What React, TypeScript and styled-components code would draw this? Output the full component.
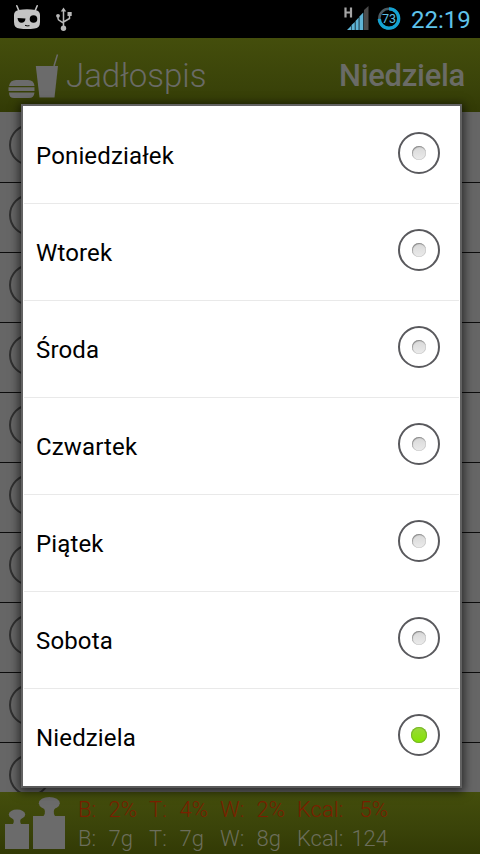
import React from 'react';
import styled, { createGlobalStyle } from 'styled-components';

const GlobalStyle = createGlobalStyle`
  * { box-sizing: border-box; }
  body { margin: 0; overflow: hidden; background: #000; font-family: Roboto, sans-serif; }
`;

const Screen = styled.div`
  position: relative;
  width: 480px;
  height: 854px;
  display: flex;
  flex-direction: column;
  overflow: hidden;
  background: #666;
`;

const StatusBar = styled.header`
  height: 38px;
  flex: none;
  display: flex;
  align-items: flex-start;
  justify-content: space-between;
  background: #000;
`;

const StatusGroup = styled.div`
  display: flex;
  align-items: flex-start;
  height: 38px;
  svg { display: block; }
`;

const Clock = styled.time`
  width: 60px;
  margin: 4px 9px 0 8px;
  font-size: 24px;
  line-height: 32px;
  white-space: nowrap;
  color: #5fc3ea;
`;

const ActionBar = styled.div`
  height: 74px;
  flex: none;
  display: flex;
  align-items: center;
  padding: 2px 15px 0 8px;
  background: linear-gradient(#444e0c, #3a4309 65%, #323a05);
  color: #6a6b66;
`;

const Title = styled.h1`
  flex: 1;
  margin: 0 0 0 7px;
  font-size: 33px;
  line-height: 40px;
  font-weight: 300;
`;

const DayLabel = styled.div`
  font-size: 31px;
  line-height: 40px;
  font-weight: 500;
  letter-spacing: -0.3px;
`;

const MealList = styled.ul`
  flex: 1;
  min-height: 0;
  margin: 0;
  padding: 0;
  overflow: hidden;
  list-style: none;
`;

const MealRow = styled.li`
  height: 70px;
  display: flex;
  align-items: center;
  padding-left: 9px;
  border-bottom: 1px solid #0c0c0c;
  &:first-child { height: 71px; }
`;

const MealCircle = styled.span`
  width: 42px;
  height: 42px;
  margin-top: -5px;
  border: 2px solid #303030;
  border-radius: 50%;
`;

const Summary = styled.footer`
  height: 62px;
  flex: none;
  display: flex;
  padding-left: 5px;
  background: linear-gradient(#444e0c, #3a4309 60%, #323a05);
`;

const Totals = styled.div`
  width: 324px;
  margin: 3px 0 0 12px;
`;

const TotalsRow = styled.div<{ $over?: boolean }>`
  display: grid;
  grid-template-columns: 27px 32px 12px 28px 31px 12px 29px 36px 12px 46px 45px;
  height: 29px;
  line-height: 29px;
  font-size: 22px;
  font-weight: 300;
  white-space: nowrap;
  color: ${p => (p.$over ? '#7a1f00' : '#6c6e5c')};
`;

const TotalLabel = styled.span<{ $col: number }>`
  grid-column: ${p => p.$col};
`;

const TotalValue = styled.span<{ $col: number; $shift?: boolean }>`
  grid-column: ${p => p.$col};
  display: flex;
  justify-content: flex-end;
  padding-right: ${p => (p.$shift ? '4px' : '0')};
`;

const Dialog = styled.div`
  position: absolute;
  left: 21px;
  top: 104px;
  width: 441px;
  height: 684px;
  border: 2px solid #626262;
  border-bottom-color: #5a5a5a;
  background: #fff;
  box-shadow: 0 2px 9px 2px rgba(0, 0, 0, 0.6);
`;

const Option = styled.div`
  height: 97px;
  display: flex;
  align-items: center;
  justify-content: space-between;
  margin: 0 1px;
  padding: 2px 19px 0 12px;
  border-bottom: 1px solid #e9e9e9;
  &:first-child { height: 98px; padding-top: 3px; }
  &:last-child { border-bottom-color: transparent; }
`;

const OptionLabel = styled.span`
  font-size: 24px;
  line-height: 32px;
  letter-spacing: 0.15px;
  color: #000;
`;

const Radio = styled.span`
  width: 42px;
  height: 42px;
  margin-top: -6px;
  display: grid;
  place-items: center;
  border: 2px solid #59595d;
  border-radius: 50%;
`;

const Dot = styled.span<{ $on: boolean }>`
  width: ${p => (p.$on ? 16 : 14)}px;
  height: ${p => (p.$on ? 16 : 14)}px;
  border-radius: 50%;
  background: ${p => (p.$on ? 'linear-gradient(#9ad83c, #84e400)' : 'linear-gradient(#d8d8d8, #ebebeb)')};
  box-shadow: ${p => (p.$on ? 'inset 0 0 0 1px #78b52c' : 'inset 0.5px 1px 1px #868686, inset 0 0 0 0.5px #c8c8c8')};
`;

const DroidIcon = () => (
  <svg width="48" height="38" viewBox="0 0 48 38">
    <path d="M16.800 5.800 19 11M37.200 5.800 35 11" stroke="#c4c4c4" strokeWidth="1.600" strokeLinecap="round" />
    <path d="M18.500 10Q27 8.500 35.500 10Q40 11 40 15V22Q40 28 34.500 28.500Q27 29.500 19.500 28.500Q14 28 14 22V15Q14 11 18.500 10Z" fill="#c4c4c4" />
    <circle cx="33.500" cy="19" r="3.800" />
    <path d="M17.500 18 25.500 18.500Q25 22.800 21.500 22.800Q18 22.500 17.500 18Z" />
    <path d="M25 25.300Q27 26.300 29.500 25.700" fill="none" stroke="#000" strokeWidth="1" />
  </svg>
);

const UsbIcon = () => (
  <svg width="32" height="38" viewBox="0 0 32 38" fill="none" stroke="#b9b9b9" strokeWidth="1.500">
    <path d="M15.500 11V27M10 16.500V18.500Q10 20 12 20.800L15.500 23M21.500 15V18.500L15.500 22" />
    <path d="M12.800 11.500 15.500 7.500 18.200 11.500Z" fill="#b9b9b9" stroke="none" />
    <circle cx="15.500" cy="28.300" r="2.700" fill="#b9b9b9" stroke="none" />
    <circle cx="10" cy="15.800" r="1.900" fill="#b9b9b9" stroke="none" />
    <path d="M19.500 12H23.700V16H19.500Z" fill="#b9b9b9" stroke="none" />
  </svg>
);

const SignalIcon = () => (
  <svg width="32" height="38" viewBox="0 0 32 38">
    <path d="M2.500 7.500V17.500M8 7.500V17.500M2.500 12.500H8" stroke="#a5a5a5" strokeWidth="2.200" />
    <path d="M21 30V10L25.500 6V30Z" fill="#4b4b4b" />
    <path d="M4 30 8 26V30ZM8.500 30V25L11.800 22V30ZM12.500 30V21L15.700 17.500V30ZM16.400 30V16.500L20.300 12.500V30Z" fill="#5fb4d6" />
  </svg>
);

const BatteryIcon = () => (
  <svg width="28" height="38" viewBox="0 0 28 38">
    <circle cx="14" cy="18.500" r="9.700" fill="none" stroke="#4a5a62" strokeWidth="2.500" />
    <circle cx="14" cy="18.500" r="9.700" fill="none" stroke="#14a2d2" strokeWidth="3.300" strokeDasharray="45 62" transform="rotate(-90 14 18.500)" />
    <text x="14" y="23" textAnchor="middle" fontFamily="Roboto" fontSize="12.500" fill="#5cc0e6">73</text>
  </svg>
);

const FoodIcon = () => (
  <svg width="51" height="46" viewBox="8 53 51 46" fill="#6b6b6b">
    <path d="M9 86Q10 80 16 80H28Q34 80 34.500 86ZM8.500 87.300H34.500V91H8.500ZM9 92.500H34.500Q34 98 29 98H14Q9 98 9 92.500Z" />
    <path d="M35.800 66H58L54.500 97.500H39.500Z" />
    <path d="M54 66 57.500 54.500" stroke="#6b6b6b" strokeWidth="1.500" />
  </svg>
);

const WeightsIcon = () => (
  <svg width="61" height="62" viewBox="5 792 61 62" fill="#6b6b6b">
    <ellipse cx="17" cy="814.500" rx="8.200" ry="5" />
    <path d="M12 818Q15 820 13 824H5V849H29V824H21Q19 820 22 818Z" />
    <ellipse cx="49.300" cy="803.300" rx="10.500" ry="6.300" />
    <path d="M42.500 807Q47 811 43.500 816H33V849H65V816H55Q52 811 56 807Z" />
  </svg>
);

const days = ['Poniedziałek', 'Wtorek', 'Środa', 'Czwartek', 'Piątek', 'Sobota', 'Niedziela'];
const selected = 'Niedziela';
const names = ['B:', 'T:', 'W:', 'Kcal:'];
const totals = [
  { over: true, values: ['2%', '4%', '2%', '5%'] },
  { over: false, values: ['7g', '7g', '8g', '124'] },
];

export default function App() {
  return (
    <Screen>
      <GlobalStyle />
      <StatusBar>
        <StatusGroup><DroidIcon /><UsbIcon /></StatusGroup>
        <StatusGroup><SignalIcon /><BatteryIcon /><Clock>22:19</Clock></StatusGroup>
      </StatusBar>
      <ActionBar>
        <FoodIcon />
        <Title>Jadłospis</Title>
        <DayLabel>{selected}</DayLabel>
      </ActionBar>
      <MealList>
        {Array.from({ length: 10 }, (_, i) => <MealRow key={i}><MealCircle /></MealRow>)}
      </MealList>
      <Summary>
        <WeightsIcon />
        <Totals>
          {totals.map((row, r) => (
            <TotalsRow key={r} $over={row.over}>
              {names.map((name, i) => (
                <React.Fragment key={name}>
                  <TotalLabel $col={i * 3 + 1}>{name}</TotalLabel>
                  <TotalValue $col={i * 3 + 2} $shift={!row.over && i < 3}>{row.values[i]}</TotalValue>
                </React.Fragment>
              ))}
            </TotalsRow>
          ))}
        </Totals>
      </Summary>
      <Dialog role="radiogroup">
        {days.map(day => (
          <Option key={day} role="radio" aria-checked={day === selected}>
            <OptionLabel>{day}</OptionLabel>
            <Radio><Dot $on={day === selected} /></Radio>
          </Option>
        ))}
      </Dialog>
    </Screen>
  );
}
